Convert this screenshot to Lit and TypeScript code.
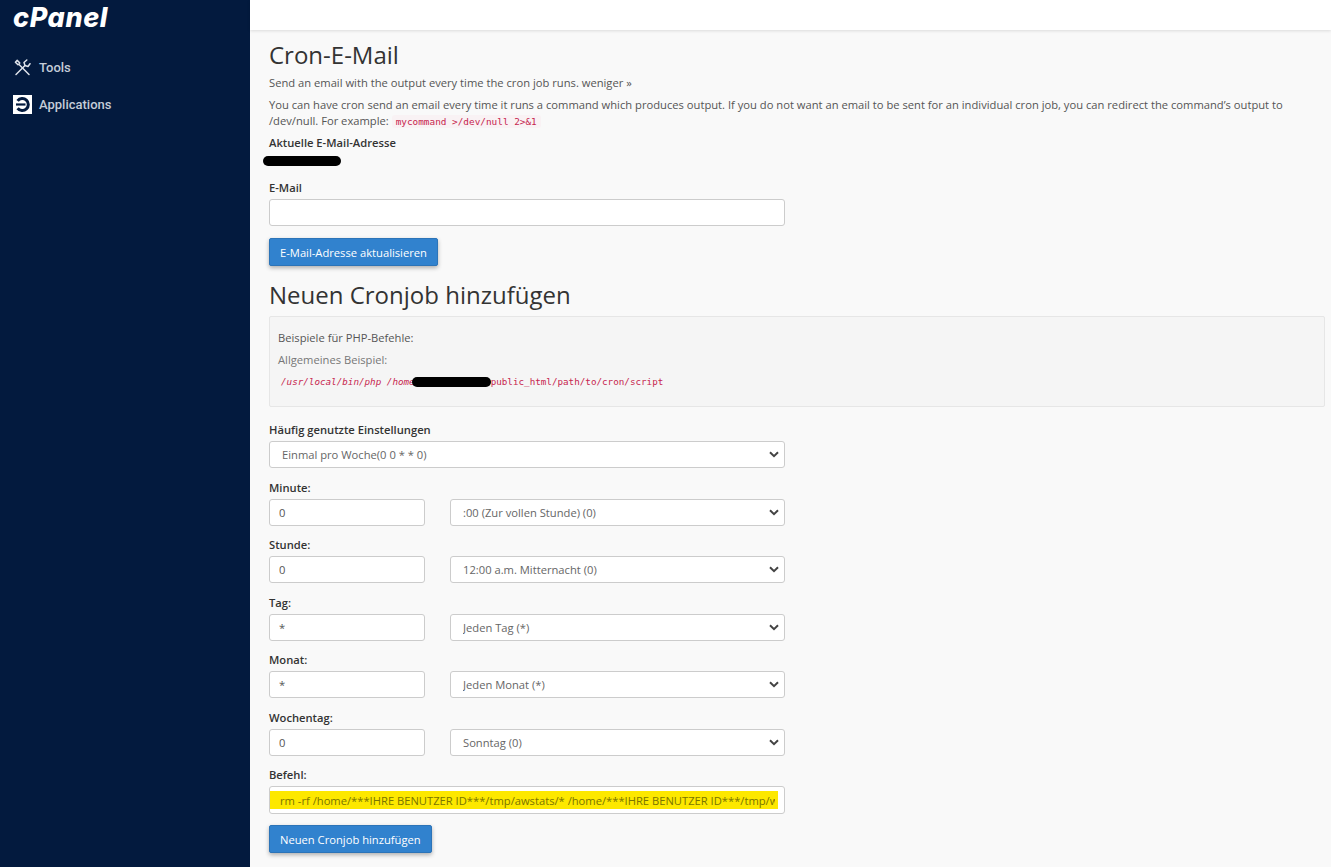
import { LitElement, html, css } from "lit";
import { customElement } from "lit/decorators.js";

const chevron = "url(\"data:image/svg+xml,%3Csvg xmlns='http://www.w3.org/2000/svg' width='10' height='7' viewBox='0 0 10 7'%3E%3Cpath d='M1 1.2 L5 5.2 L9 1.2' fill='none' stroke='%23444' stroke-width='2'/%3E%3C/svg%3E\")";

@customElement("app-root")
export class AppRoot extends LitElement {
  static styles = css`
    :host { display: block; height: 867px; overflow: hidden; font-family: "Open Sans", sans-serif; font-size: 11.2px; color: #555; background: #f9f9f9; }
    * { box-sizing: border-box; }
    .shell { display: flex; height: 867px; }
    .side { width: 250px; flex: none; background: #031a3e; color: #c4ccd8; font-family: Roboto, sans-serif; font-size: 13px; font-weight: 500; }
    .logo { height: 37px; padding: 0 0 0 13px; color: #fff; font: italic 800 27px/36px Inter, sans-serif; letter-spacing: 0.6px; }
    .nav { display: flex; align-items: center; gap: 7px; height: 37px; padding-left: 13px; }
    .nav.first { margin-top: 12px; }
    .nav svg { width: 19px; height: 19px; flex: none; }
    .main { flex: 1; min-width: 0; display: flex; flex-direction: column; }
    .top { height: 30px; flex: none; background: #fff; box-shadow: 0 1px 3px rgba(0,0,0,.12); }
    .content { padding: 10px 6px 0 19px; }
    h1 { margin: 0; font-size: 24px; line-height: 30px; font-weight: 400; color: #333; }
    h2 { margin: 13px 0 0; font-size: 24px; line-height: 32px; font-weight: 400; color: #333; }
    p { margin: 0; line-height: 16px; }
    .lead { margin-top: 5px; }
    .para { margin-top: 6px; }
    code { font-family: "DejaVu Sans Mono", monospace; font-size: 9.4px; color: #c7254e; background: #f9f2f4; padding: 1px 4px; border-radius: 3px; }
    label, .lbl { display: block; font-weight: 600; color: #333; line-height: 16px; }
    .cur { margin-top: 5px; }
    .pill { width: 78px; height: 10px; margin: 5px 0 0 -6px; background: #000; border-radius: 5px; }
    .email-lbl { margin-top: 14px; }
    input, select { display: block; width: 516px; height: 27px; margin: 3px 0 0; border: 1px solid #ccc; border-radius: 3px; background: #fff; color: #555; font: 11.2px "Open Sans", sans-serif; padding: 0 9px; outline: none; }
    select { color: #666; padding: 0 24px 0 12px; appearance: none; -webkit-appearance: none; background: #fff ${css([chevron] as unknown as TemplateStringsArray)} no-repeat right 5px center; }
    .btn { display: block; margin-top: 12px; height: 28px; padding: 0 10px; background: #3182ce; color: #fff; border: 1px solid #2c74b8; border-radius: 2px; box-shadow: 0 2px 4px rgba(0,0,0,.3); font: 11.2px "Open Sans", sans-serif; }
    .well { margin-top: 5px; height: 91px; padding: 13px 8px 0; background: #f5f5f5; border: 1px solid #e6e6e6; border-radius: 2px; }
    .well p { line-height: 16px; }
    .well .muted { margin-top: 6px; color: #777; }
    .cmd { display: flex; align-items: center; margin-top: 6px; padding-left: 3px; font-family: "DejaVu Sans Mono", monospace; font-size: 9.25px; color: #c7254e; line-height: 16px; }
    .cmd i { font-style: italic; }
    .cmd b { display: inline-block; width: 79px; height: 10px; margin-left: -3px; background: #000; border-radius: 5px; }
    .group { margin-top: 11.5px; }
    .group.first { margin-top: 15px; }
    .row { display: flex; gap: 25px; width: 516px; }
    .row input { width: 156px; flex: none; }
    .row select { flex: 1; min-width: 0; width: auto; }
    .hl { height: 28px; color: #7a7400; background: linear-gradient(#fde800,#fde800) left center / 508px 18px no-repeat, #fff; padding: 0 9px 0 10px; }
    .btn.add { margin-top: 11px; }
  `;

  private field(name: string, val: string, opt: string) {
    return html`<div class="group">
      <label>${name}</label>
      <div class="row">
        <input .value=${val} />
        <select><option>${opt}</option></select>
      </div>
    </div>`;
  }

  render() {
    return html`<div class="shell">
      <aside class="side">
        <div class="logo">cPanel</div>
        <div class="nav first">
          <svg viewBox="0 0 19 19" fill="none" stroke="#dfe3ea" stroke-width="1.5" stroke-linecap="round" stroke-linejoin="round">
            <path d="M3 16.5 L12 7.5" />
            <path d="M11 4.5 L13.8 2 M12 7.5 L11 4.5 M12 7.5 L15 8.5 L17 5.7" />
            <path d="M6.3 6.8 L16 16.5" />
            <path d="M2.4 4.2 L4.2 2.4 L6.8 5 L5 6.8 Z" />
          </svg>
          <span>Tools</span>
        </div>
        <div class="nav">
          <svg viewBox="0 0 19 19">
            <rect width="19" height="19" fill="#fff" />
            <path d="M4.6 5.8 A6 6 0 1 1 4.6 13.2" fill="none" stroke="#031a3e" stroke-width="3" />
            <path d="M3 9.5 H12.5" stroke="#031a3e" stroke-width="2.2" />
          </svg>
          <span>Applications</span>
        </div>
      </aside>
      <div class="main">
        <div class="top"></div>
        <div class="content">
          <h1>Cron-E-Mail</h1>
          <p class="lead">Send an email with the output every time the cron job runs. weniger »</p>
          <p class="para">You can have cron send an email every time it runs a command which produces output. If you do not want an email to be sent for an individual cron job, you can redirect the command’s output to /dev/null. For example: <code>mycommand &gt;/dev/null 2&gt;&amp;1</code></p>
          <div class="lbl cur">Aktuelle E-Mail-Adresse</div>
          <div class="pill"></div>
          <label class="email-lbl">E-Mail</label>
          <input />
          <button class="btn">E-Mail-Adresse aktualisieren</button>
          <h2>Neuen Cronjob hinzufügen</h2>
          <div class="well">
            <p>Beispiele für PHP-Befehle:</p>
            <p class="muted">Allgemeines Beispiel:</p>
            <div class="cmd"><i>/usr/local/bin/php /home</i><b></b><span>public_html/path/to/cron/script</span></div>
          </div>
          <div class="group first">
            <label>Häufig genutzte Einstellungen</label>
            <select><option>Einmal pro Woche(0 0 * * 0)</option></select>
          </div>
          ${this.field("Minute:", "0", ":00 (Zur vollen Stunde) (0)")}
          ${this.field("Stunde:", "0", "12:00 a.m. Mitternacht (0)")}
          ${this.field("Tag:", "*", "Jeden Tag (*)")}
          ${this.field("Monat:", "*", "Jeden Monat (*)")}
          ${this.field("Wochentag:", "0", "Sonntag (0)")}
          <div class="group">
            <label>Befehl:</label>
            <input class="hl" .value=${"rm -rf /home/***IHRE BENUTZER ID***/tmp/awstats/* /home/***IHRE BENUTZER ID***/tmp/webalizer/*"} />
          </div>
          <button class="btn add">Neuen Cronjob hinzufügen</button>
        </div>
      </div>
    </div>`;
  }
}
